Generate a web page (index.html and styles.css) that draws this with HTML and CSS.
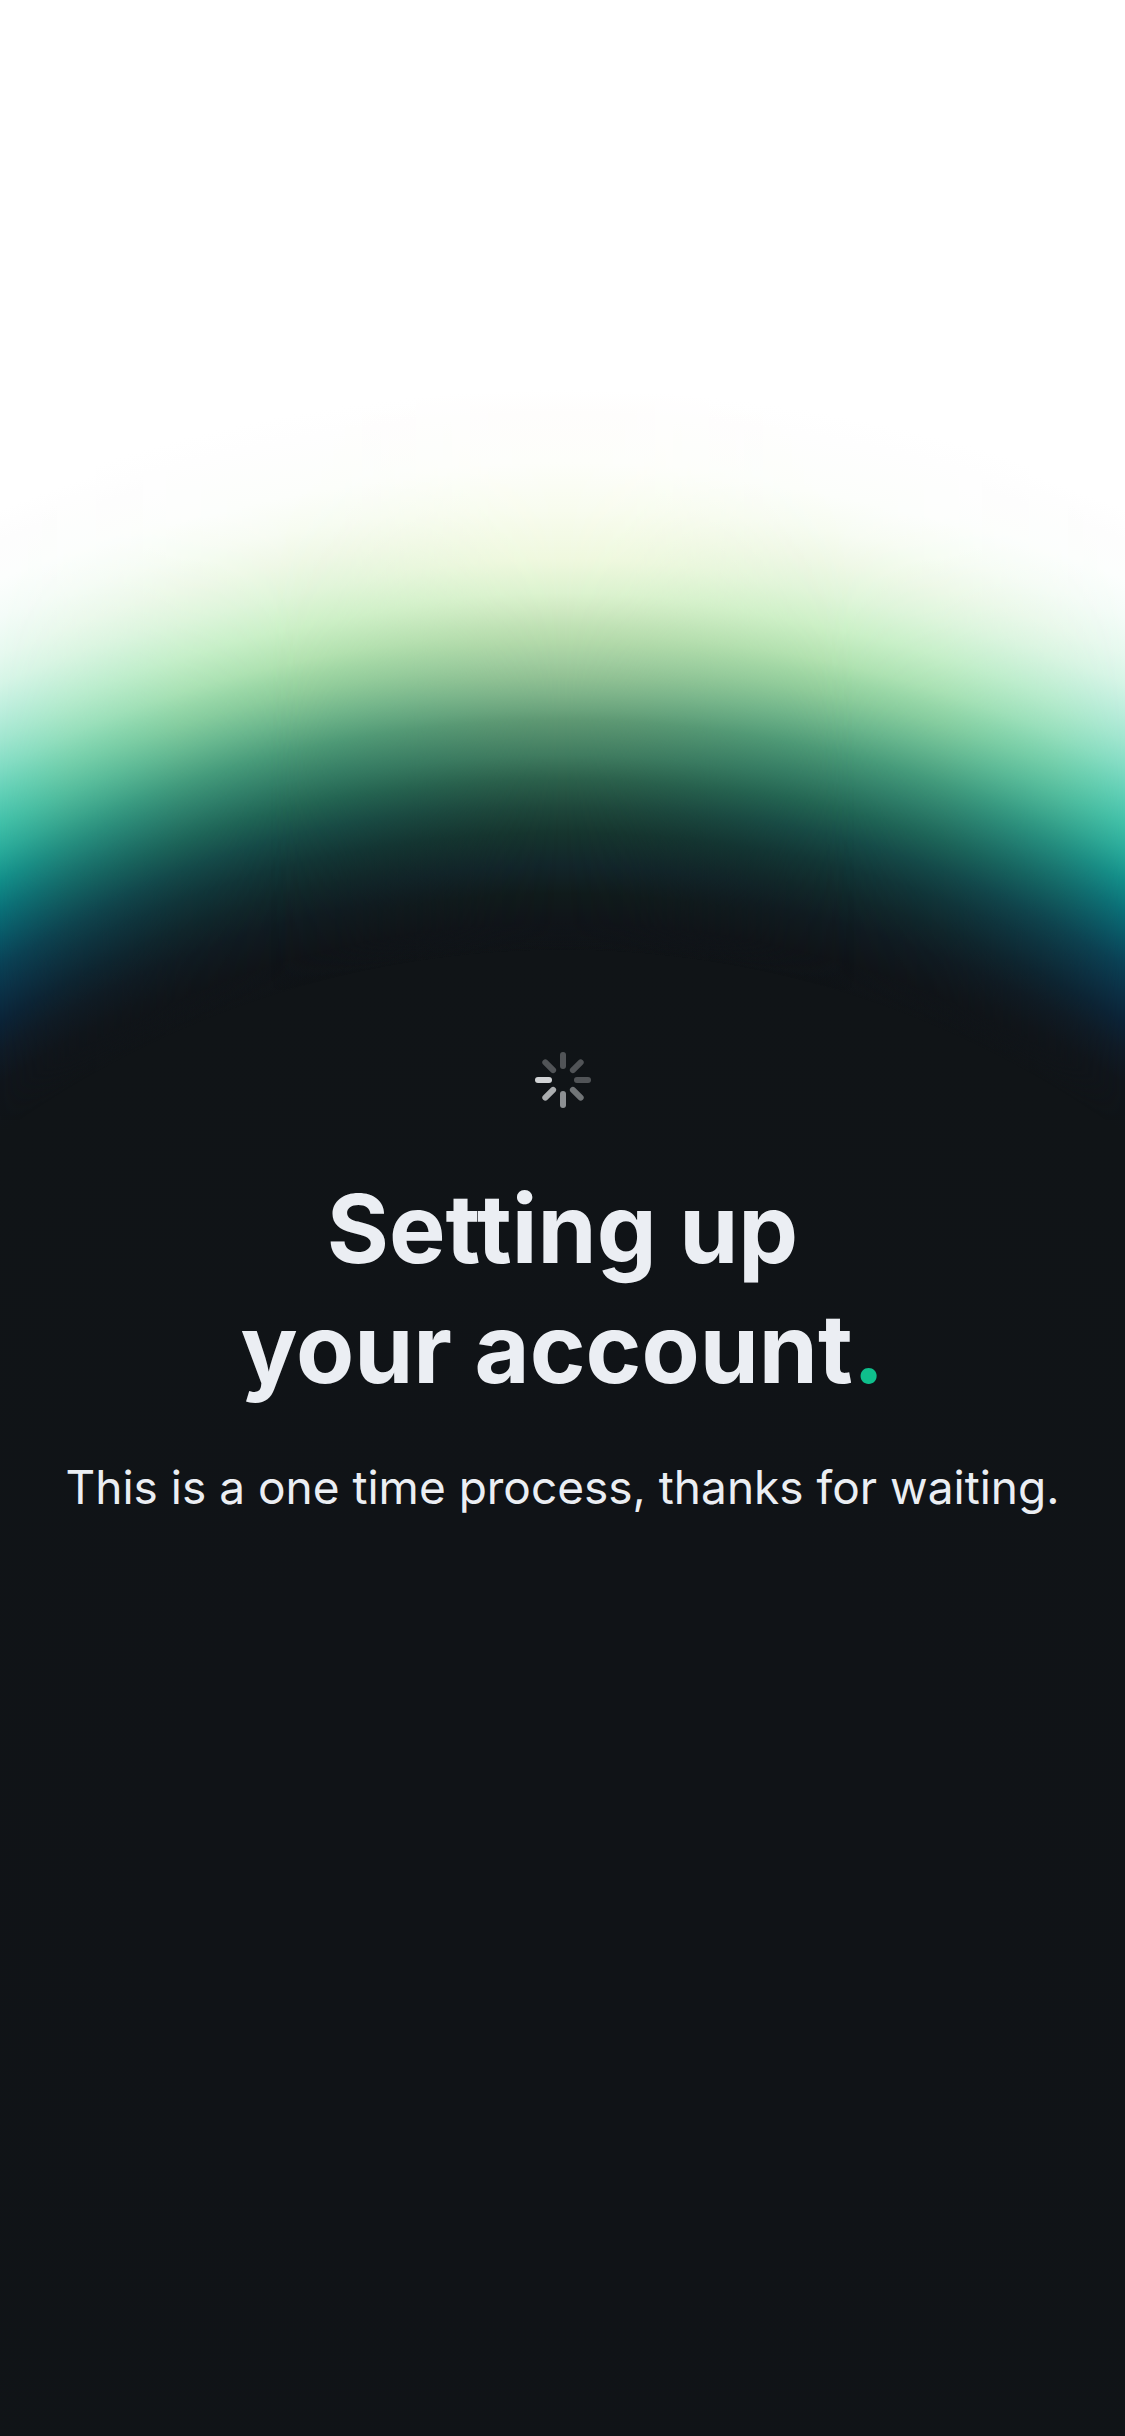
FILE: index.html
```html
<!DOCTYPE html>
<html lang="en">
<head>
<meta charset="utf-8">
<meta name="viewport" content="width=device-width, initial-scale=1">
<title>Setting up your account</title>
<link rel="stylesheet" href="styles.css">
</head>
<body>
<main class="setup">
  <svg class="spinner" viewBox="-29 -29 58 58" role="img" aria-label="Loading">
    <g stroke="#f8fafc" stroke-width="6" stroke-linecap="round">
      <path d="M0-14V-25" opacity=".28"/>
      <path d="M0-14V-25" opacity=".28" transform="rotate(45)"/>
      <path d="M0-14V-25" opacity=".28" transform="rotate(90)"/>
      <path d="M0-14V-25" opacity=".42" transform="rotate(135)"/>
      <path d="M0-14V-25" opacity=".54" transform="rotate(180)"/>
      <path d="M0-14V-25" opacity=".67" transform="rotate(225)"/>
      <path d="M0-14V-25" opacity=".83" transform="rotate(270)"/>
      <path d="M0-14V-25" opacity=".28" transform="rotate(315)"/>
    </g>
  </svg>
  <h1 class="title">Setting up<br>your account<span class="dot">.</span></h1>
  <p class="note">This is a one time process, thanks for waiting.</p>
</main>
</body>
</html>
```
FILE: styles.css
```css
body {
  margin: 0;
  background: #101417;
  color: #ebeef3;
  font-family: Inter, "Liberation Sans", sans-serif;
}

.setup {
  position: relative;
  isolation: isolate;
  box-sizing: border-box;
  min-height: 100vh;
  padding: 1051px 32px 64px;
  display: flex;
  flex-direction: column;
  align-items: center;
  text-align: center;
  /* outer colours of the glow: teal fading to navy */
  background: radial-gradient(circle at 50% 1900px,
    #101317 400px, #101417 950px, #10151b 991px, #0f1b27 1018px, #0b2337 1042px,
    #0b3046 1065px, #0a4055 1090px, #095767 1114px, #0a7078 1138px,
    #128e8a 1164px, #27a99a 1188px, #3fbfa8 1213px, #5ecfb6 1239px,
    #80dcc4 1264px, #a0e6d0 1289px, #bceedd 1315px, #d5f5e7 1340px,
    #e6f9ef 1366px, #f4fcf8 1401px, #fcfefd 1436px, #fdfdfd 1471px,
    #fff 1500px);
}

.setup::before,
.setup::after {
  content: "";
  position: absolute;
  inset: 0 0 auto;
  height: 1120px;
  z-index: -1;
}

/* green band between the edges and the middle */
.setup::before {
  background: radial-gradient(circle at 50% 1900px,
    #10141700 950px, #101418 979px, #101b21 1015px, #112729 1042px,
    #123636 1070px, #174b46 1098px, #226553 1125px, #357f66 1152px,
    #4c9a77 1180px, #6fb68b 1209px, #8fcc9a 1235px, #9fd7a4 1251px,
    #b2e2b0 1267px, #ccf0c6 1300px, #e0f5d9 1333px, #eff8e6 1365px,
    #f7fcf2 1395px, #fcfefb 1430px, #fefefe 1485px, #fff 1510px);
  mask-image: linear-gradient(90deg, transparent, #0006 6%, #000c 16%, #000 27%, #000 73%, #000c 84%, #0006 94%, transparent);
}

/* yellow-green crown in the middle */
.setup::after {
  background: radial-gradient(circle at 50% 1900px,
    #10141700 950px, #101419 977px, #101b1b 1006px, #12252a 1034px,
    #16352e 1067px, #1e463a 1091px, #2c604b 1120px, #417c60 1145px,
    #5f9873 1180px, #6ca47d 1190px, #80b48a 1207px, #92c194 1223px,
    #a2cda0 1240px, #b2d8a9 1257px, #bfe0b4 1273px, #cfe9c2 1290px,
    #dcf2cf 1307px, #eff8de 1340px, #f8fcee 1389px, #fdfefa 1438px,
    #fefdfc 1487px, #fff 1510px);
  mask-image: linear-gradient(90deg, transparent 24%, #0002 30%, #000d 44%, #000 50%, #000d 56%, #0002 70%, transparent 76%);
}

.spinner {
  width: 58px;
  height: 58px;
}

.title {
  margin: 60px 0 48px;
  font-size: 95px;
  line-height: 120px;
  font-weight: 700;
}

.dot {
  color: #0fbf8c;
}

.note {
  margin: 0;
  font-size: 46px;
  line-height: 60px;
}
```
